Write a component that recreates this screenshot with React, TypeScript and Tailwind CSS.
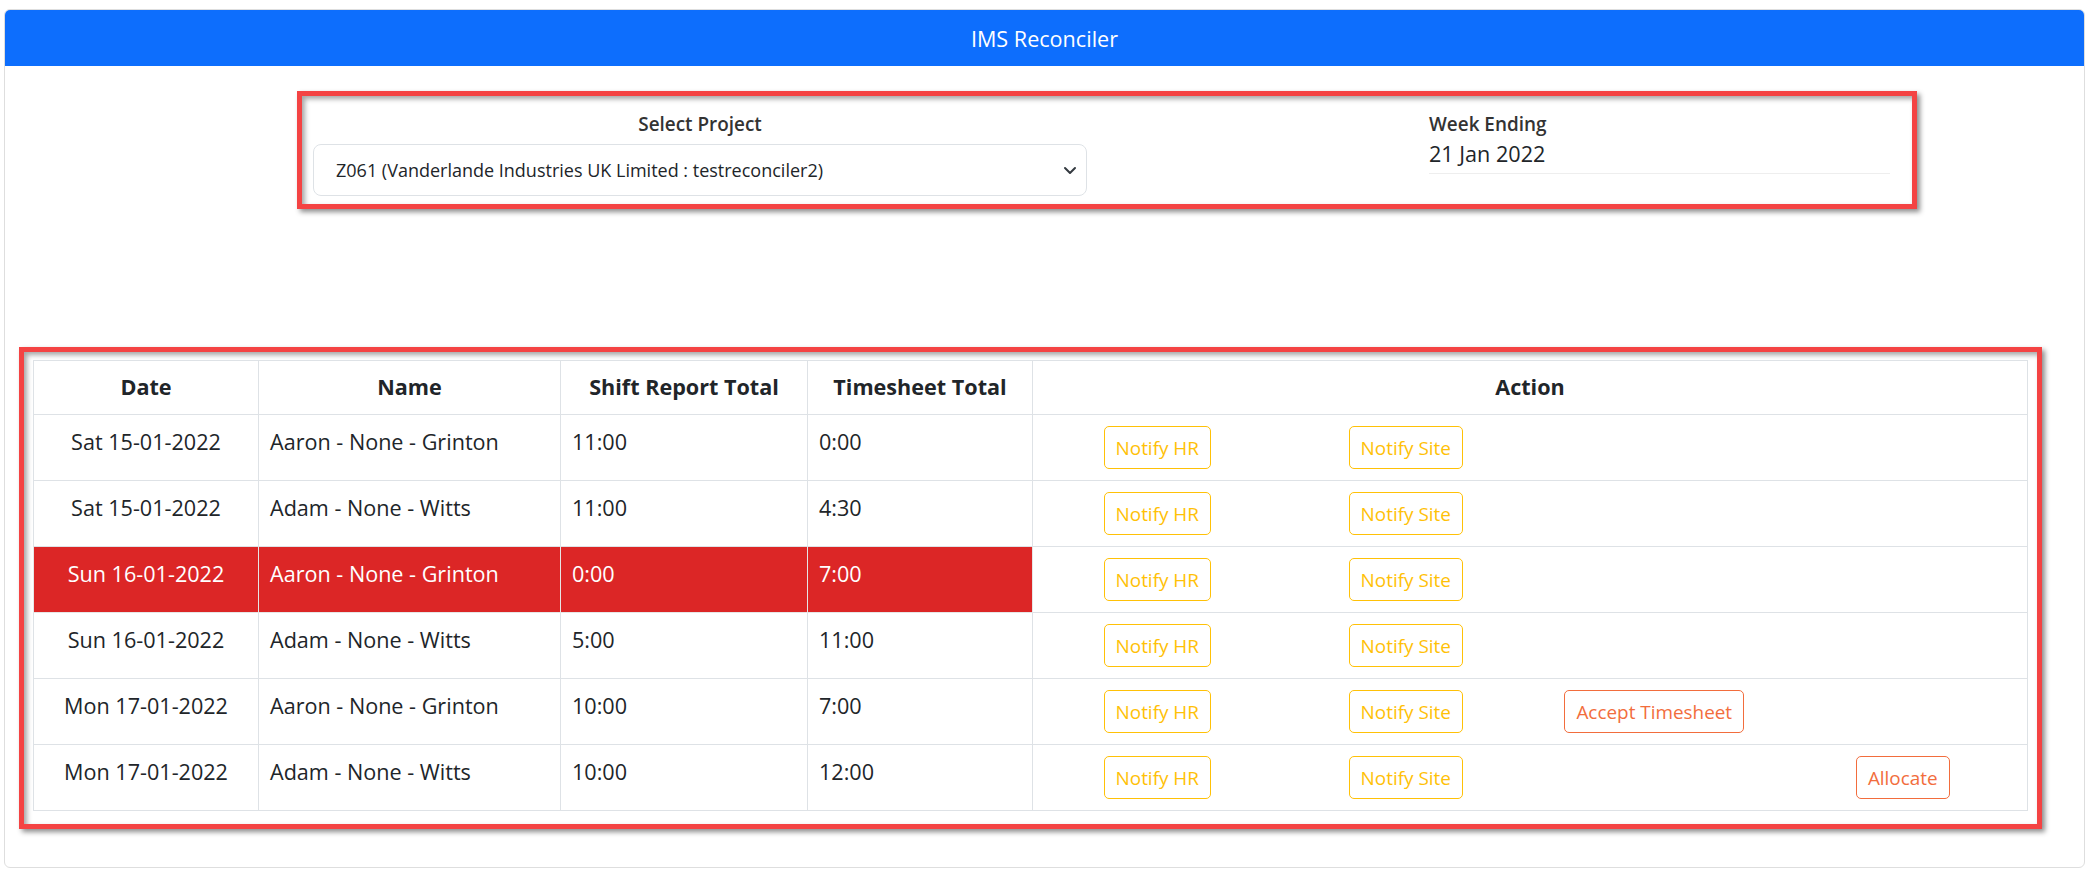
import React from "react";

type Row = {
  date: string;
  name: string;
  shift: string;
  timesheet: string;
  flagged?: boolean;
  accept?: boolean;
  allocate?: boolean;
};

const rows: Row[] = [
  { date: "Sat 15-01-2022", name: "Aaron - None - Grinton", shift: "11:00", timesheet: "0:00" },
  { date: "Sat 15-01-2022", name: "Adam - None - Witts", shift: "11:00", timesheet: "4:30" },
  { date: "Sun 16-01-2022", name: "Aaron - None - Grinton", shift: "0:00", timesheet: "7:00", flagged: true },
  { date: "Sun 16-01-2022", name: "Adam - None - Witts", shift: "5:00", timesheet: "11:00" },
  { date: "Mon 17-01-2022", name: "Aaron - None - Grinton", shift: "10:00", timesheet: "7:00", accept: true },
  { date: "Mon 17-01-2022", name: "Adam - None - Witts", shift: "10:00", timesheet: "12:00", allocate: true },
];

const WarnButton = ({ children }: { children: React.ReactNode }) => (
  <button className="h-[43px] px-[11px] border border-[#ffc107] rounded-[5px] text-[#ffc107] text-[18.9px] leading-[28px] bg-white">
    {children}
  </button>
);

const OrangeButton = ({ children }: { children: React.ReactNode }) => (
  <button className="h-[43px] px-[11px] border border-[#f26d3d] rounded-[5px] text-[#f26d3d] text-[18.9px] leading-[28px] bg-white">
    {children}
  </button>
);

// red annotation frame with the drop shadow that shows inside and outside
const frame =
  "border-[5px] border-[#f44343] shadow-[3px_3px_5px_rgba(0,0,0,0.45),inset_3px_3px_5px_rgba(0,0,0,0.35)]";

export default function App() {
  return (
    <div
      className="w-full h-[876px] bg-white text-[#212529] pt-[9px] pl-[4px]"
      style={{ fontFamily: '"Open Sans", "Noto Sans", sans-serif' }}
    >
      <div className="w-[2081px] h-[859px] border border-[#dedede] rounded-[6px] overflow-hidden">
        <div className="h-[56px] bg-[#0d6efd] flex items-center justify-center text-white text-[21.6px] pt-[3px]">
          IMS Reconciler
        </div>

        {/* project / week selector */}
        <div className={`ml-[292px] mt-[25px] w-[1620px] h-[118px] ${frame} flex pl-[11px] pt-[14px]`}>
          <div className="w-[774px] flex flex-col">
            <label className="text-center text-[18.9px] font-semibold leading-[28px] text-[#333]">
              Select Project
            </label>
            <div className="mt-[6px] h-[52px] border border-[#dee2e6] rounded-[8px] flex items-center justify-between pl-[22px] pr-[8px] text-[18px]">
              <span>Z061 (Vanderlande Industries UK Limited : testreconciler2)</span>
              <svg width="16" height="16" viewBox="0 0 16 16" fill="none">
                <path d="M3 6l5 5 5-5" stroke="#343a40" strokeWidth="2" strokeLinecap="round" strokeLinejoin="round" />
              </svg>
            </div>
          </div>
          <div className="ml-[342px] w-[461px] flex flex-col">
            <label className="text-[18.9px] font-semibold leading-[28px] text-[#333]">Week Ending</label>
            <div className="text-[21.6px] leading-[32px] pb-[3px] border-b border-[#eeeeee]">21 Jan 2022</div>
          </div>
        </div>

        {/* reconciliation table */}
        <div className={`ml-[14px] mt-[138px] w-[2023px] h-[482px] ${frame} pl-[9px] pt-[8px]`}>
          <table className="border-collapse text-[21.6px] leading-[32.4px]">
            <thead>
              <tr className="h-[54px]">
                <th className="w-[225px] border border-[#dee2e6] px-[11px] font-bold">Date</th>
                <th className="w-[302px] border border-[#dee2e6] px-[11px] font-bold">Name</th>
                <th className="w-[247px] border border-[#dee2e6] px-[11px] font-bold">Shift Report Total</th>
                <th className="w-[225px] border border-[#dee2e6] px-[11px] font-bold">Timesheet Total</th>
                <th className="w-[995px] border border-[#dee2e6] px-[11px] font-bold">Action</th>
              </tr>
            </thead>
            <tbody>
              {rows.map((r, i) => {
                const cell = r.flagged
                  ? "bg-[#dc2626] text-white border border-[#e6e6e6] align-top px-[11px] pt-[11px]"
                  : "border border-[#dee2e6] align-top px-[11px] pt-[11px]";
                return (
                  <tr key={i} className="h-[66px]">
                    <td className={`${cell} text-center`}>{r.date}</td>
                    <td className={cell}>{r.name}</td>
                    <td className={cell}>{r.shift}</td>
                    <td className={cell}>{r.timesheet}</td>
                    <td className="border border-[#dee2e6] align-middle px-0 py-[11px]">
                      <div className="grid grid-cols-4 justify-items-center">
                        <WarnButton>Notify HR</WarnButton>
                        <WarnButton>Notify Site</WarnButton>
                        <div>{r.accept && <OrangeButton>Accept Timesheet</OrangeButton>}</div>
                        <div>{r.allocate && <OrangeButton>Allocate</OrangeButton>}</div>
                      </div>
                    </td>
                  </tr>
                );
              })}
            </tbody>
          </table>
        </div>
      </div>
    </div>
  );
}
